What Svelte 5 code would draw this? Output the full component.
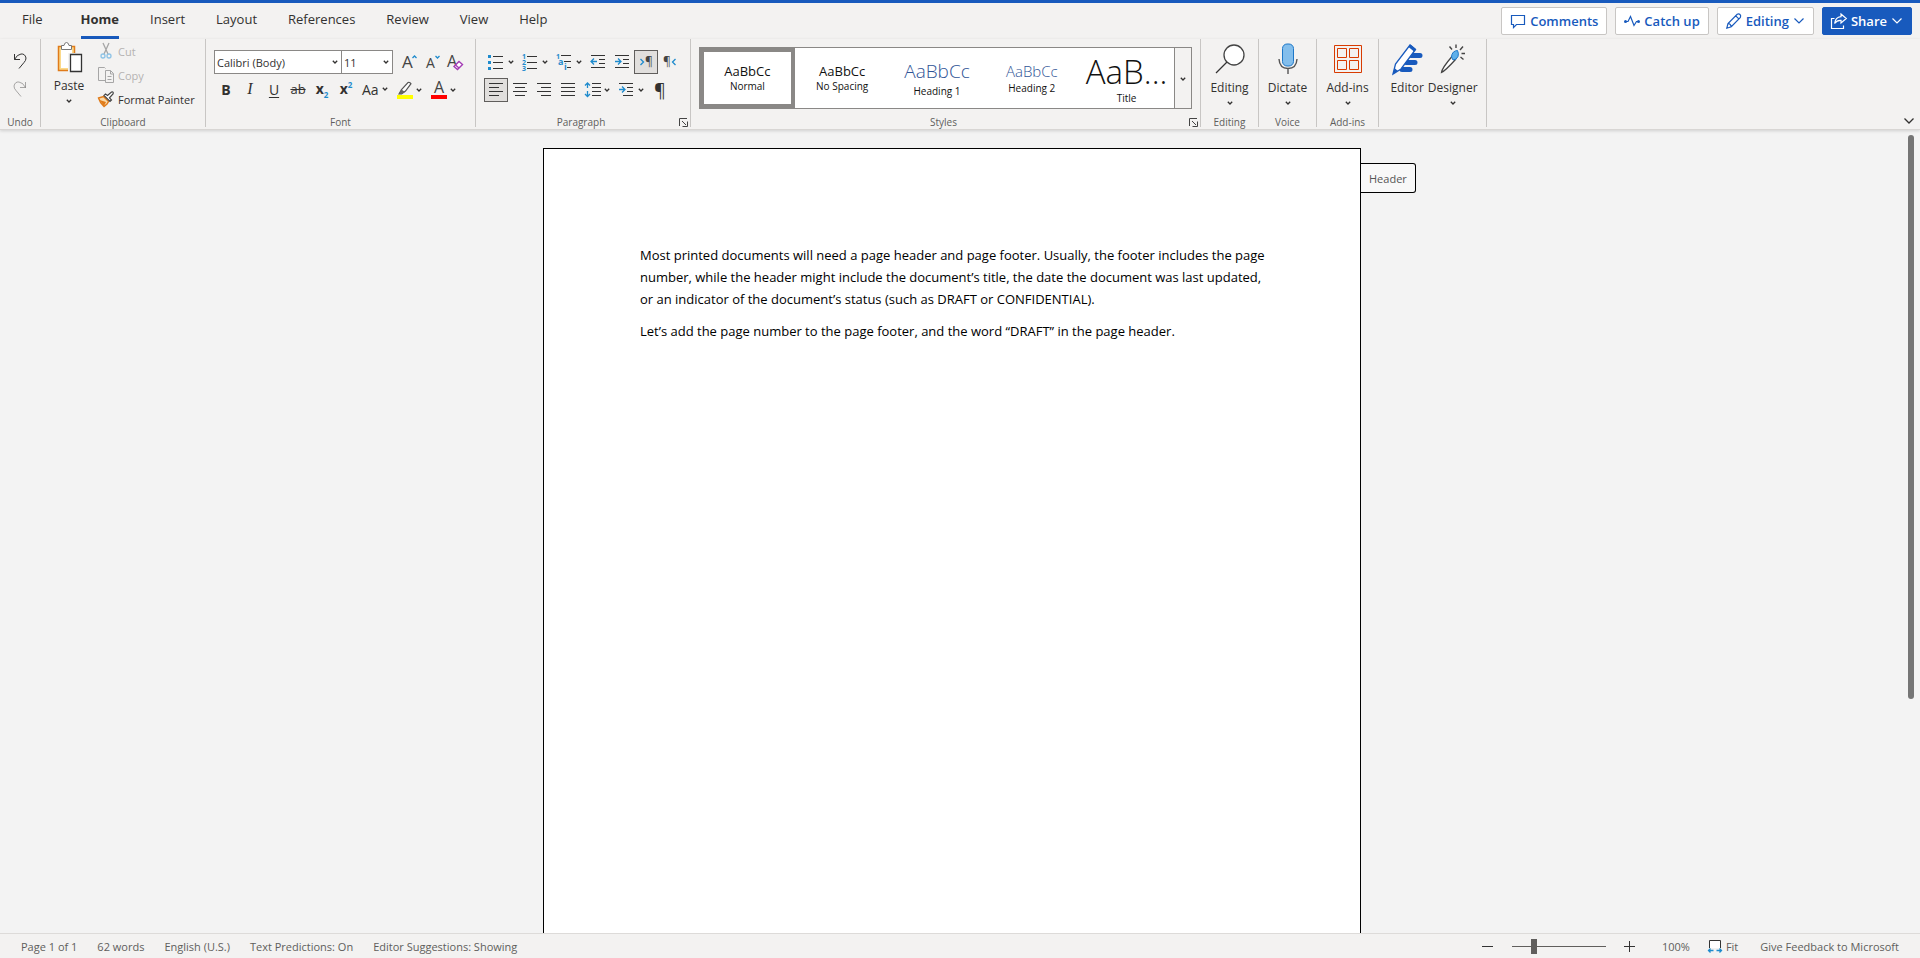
<script>
  const tabs = ['File', 'Home', 'Insert', 'Layout', 'References', 'Review', 'View', 'Help'];
  const styles = [
    { name: 'Normal', sample: 'AaBbCc', kind: 'normal' },
    { name: 'No Spacing', sample: 'AaBbCc', kind: 'normal' },
    { name: 'Heading 1', sample: 'AaBbCc', kind: 'heading1' },
    { name: 'Heading 2', sample: 'AaBbCc', kind: 'heading2' },
    { name: 'Title', sample: 'AaB...', kind: 'title' }
  ];
  const statusItems = [
    'Page 1 of 1',
    '62 words',
    'English (U.S.)',
    'Text Predictions: On',
    'Editor Suggestions: Showing'
  ];

  let activeTab = $state('Home');
  let activeStyle = $state('Normal');
  let align = $state('left');
  let zoom = $state(22);

  // horizontal strokes of the four alignment icons: [x1, x2]
  const alignIcons = {
    left: [[1, 15], [1, 11], [1, 15], [1, 11]],
    center: [[1, 15], [3, 13], [1, 15], [3, 13]],
    right: [[1, 15], [5, 15], [1, 15], [5, 15]],
    justify: [[1, 15], [1, 15], [1, 15], [1, 15]]
  };
</script>

{#snippet chevron()}
  <svg class="chevron" width="8" height="8" viewBox="0 0 8 8"><path d="M1.8 2.8 4 5l2.2-2.2" /></svg>
{/snippet}

{#snippet wideChevron()}
  <svg class="wide-chevron" width="12" height="12" viewBox="0 0 12 12"><path d="M1.5 3.5 6 8l4.500-4.500" /></svg>
{/snippet}

{#snippet launcher(name)}
  <button class="launcher" aria-label={name}>
    <svg width="9" height="9" viewBox="0 0 9 9"><path d="M.5 8V.5H8M3 3l4 4M8.500 3.500v5h-5" /></svg>
  </button>
{/snippet}

<div class="app">
  <header class="top">
    <nav class="tabs">
      {#each tabs as tab}
        <button class="tab" class:active={activeTab === tab} class:file={tab === 'File'} onclick={() => (activeTab = tab)}>{tab}</button>
      {/each}
    </nav>
    <div class="actions">
      <button class="action">
        <svg width="16" height="16" viewBox="0 0 16 16"><path d="M1.500 2.500h13v9h-8l-3 3v-3h-2z" /></svg>
        Comments
      </button>
      <button class="action">
        <svg width="16" height="16" viewBox="0 0 16 16">
          <path d="M1.500 8.500h2.500l2.500-5 3.500 9 2.500-4H15" />
          <circle class="dot" cx="1.500" cy="8.500" r="1.500" /><circle class="dot" cx="14.500" cy="8.500" r="1.500" />
        </svg>
        Catch up
      </button>
      <button class="action">
        <svg width="16" height="16" viewBox="0 0 16 16">
          <path d="M.8 15.200l1.200-4.700L11.200 1.300q1.600-1 2.800.2t.4 2.800L5.300 13.700zM9.700 2.800l3.400 3.400M2 10.500q2.700.3 3.300 3.200" />
        </svg>
        Editing
        {@render wideChevron()}
      </button>
      <button class="action primary">
        <svg width="16" height="16" viewBox="0 0 16 16">
          <path d="M3.500 5.500h-3v10h12v-3" />
          <path d="M10 1l5.300 4.500L10 10V7.300Q6 7 3.600 10.500 4.300 4.300 10 3.700z" />
        </svg>
        Share
        {@render wideChevron()}
      </button>
    </div>
  </header>

  <div class="ribbon">
    <section class="group undo">
      <div class="body stack">
        <button class="icon" aria-label="Undo">
          <svg class="line" width="16" height="18" viewBox="0 0 16 18"><path d="M2.500 2v5.500H8M2.500 7.500Q5 2.500 9 2T14 6q0 2.500-2 4.500l-5 6" /></svg>
        </button>
        <button class="icon" aria-label="Redo" disabled>
          <svg class="line faded" width="16" height="18" viewBox="0 0 16 18"><path d="M13.500 2v5.500H8M13.500 7.500Q11 2.500 7 2T2 6q0 2.500 2 4.500l5 6" /></svg>
        </button>
      </div>
      <div class="caption">Undo</div>
    </section>

    <section class="group clipboard">
      <div class="body">
        <button class="large">
          <svg width="28" height="32" viewBox="0 0 28 32">
            <path d="M3.500 5.500h16v24h-16z" fill="#fbd98a" stroke="#e07b1a" stroke-width="1.500" />
            <path d="M6 8h11v19H6z" fill="#fff" />
            <path d="M6.500 8.500v-4H9q.5-3 2.500-3t2.500 3h2.500v4z" fill="#fff" stroke="#777" />
            <path d="M13 12h13v19H13z" fill="#f3f2f1" />
            <path d="M15.500 13.500h11v17h-11z" fill="#fff" stroke="#333" stroke-width="1.300" />
          </svg>
          <span>Paste</span>
          {@render chevron()}
        </button>
        <div class="list">
          <button disabled>
            <svg width="18" height="18" viewBox="0 0 18 18">
              <path d="M6 1l5 11M12 1L7 12" fill="none" stroke="#a6a6a6" stroke-width="1.300" />
              <circle cx="6" cy="14" r="2" fill="none" stroke="#8ec3e6" stroke-width="1.300" /><circle cx="12" cy="14" r="2" fill="none" stroke="#8ec3e6" stroke-width="1.300" />
            </svg>
            Cut
          </button>
          <button disabled>
            <svg width="18" height="18" viewBox="0 0 18 18" fill="none" stroke="#a6a6a6">
              <path d="M8 14.500H1.500v-13h6l1 1" />
              <path d="M8.500 4.500h5l3 3v9h-8zM13.500 4.500v3.500h3M10.500 10.500h4M10.500 13.500h4" />
            </svg>
            Copy
          </button>
          <button>
            <svg width="18" height="18" viewBox="0 0 18 18">
              <path d="M1.500 8l5-1.500 5 5L10 14l-3 2.500Q3 13 1.500 8z" fill="#f9d9a8" stroke="#e07b1a" stroke-width="1.400" />
              <path d="M2.500 10l6.500 2-2 4z" fill="#e07b1a" />
              <path d="M7 5.500l6 6 1.500-1.500-2-2.200 3.500-3.800Q17 1.500 14.500 2l-4 3.500-2-1.500z" fill="#fff" stroke="#444" stroke-width="1.200" />
            </svg>
            Format Painter
          </button>
        </div>
      </div>
      <div class="caption">Clipboard</div>
    </section>

    <section class="group font">
      <div class="body rows">
        <div class="row">
          <div class="combo">
            <label class="family">
              <select aria-label="Font"><option>Calibri (Body)</option><option>Arial</option></select>
              {@render chevron()}
            </label>
            <label class="size">
              <select aria-label="Font size"><option>11</option><option>12</option></select>
              {@render chevron()}
            </label>
          </div>
          <button class="icon" aria-label="Grow font">
            <svg width="18" height="18" viewBox="0 0 18 18"><text x="2" y="15" font-size="17">A</text><path class="blue" d="M12.500 5l2-2 2 2" /></svg>
          </button>
          <button class="icon" aria-label="Shrink font">
            <svg width="18" height="18" viewBox="0 0 18 18"><text x="3" y="15" font-size="14">A</text><path class="blue" d="M12.500 3l2 2 2-2" /></svg>
          </button>
          <button class="icon" aria-label="Clear formatting">
            <svg width="18" height="18" viewBox="0 0 18 18"><text x="1" y="14" font-size="16">A</text><path d="M8 13.500L13 8.500l3.500 3-5 5z" fill="#fff" stroke="#a33bb5" stroke-width="1.400" /><path d="M9.500 12l3.500 3" stroke="#a33bb5" stroke-width="1.400" /></svg>
          </button>
        </div>
        <div class="row">
          <button class="icon glyph bold">B</button>
          <button class="icon glyph italic">I</button>
          <button class="icon glyph underline">U</button>
          <button class="icon glyph strike">ab</button>
          <button class="icon glyph bold"><span class="script">x<sub>2</sub></span></button>
          <button class="icon glyph bold"><span class="script">x<sup>2</sup></span></button>
          <button class="icon split glyph">Aa{@render chevron()}</button>
          <button class="icon split" aria-label="Highlight color">
            <svg width="18" height="18" viewBox="0 0 18 18">
              <path d="M3 13l2.500-4.500L12 1.500q2-.5 3 1.200L9.500 10 5.500 13z" fill="#fff" stroke="#555" stroke-width="1.200" /><path d="M3 13l2.500-4.500 3.500 2.500-3.500 2z" fill="#666" />
              <path d="M1 14h16v4H1z" fill="#ffff00" />
            </svg>
            {@render chevron()}
          </button>
          <button class="icon split" aria-label="Font color">
            <svg width="18" height="18" viewBox="0 0 18 18"><text x="4" y="12" font-size="16">A</text><path d="M1 14h16v4H1z" fill="#ff0000" /></svg>
            {@render chevron()}
          </button>
        </div>
      </div>
      <div class="caption">Font</div>
    </section>

    <section class="group paragraph">
      <div class="body rows">
        <div class="row">
          <button class="icon split" aria-label="Bullets">
            <svg class="line" width="16" height="18" viewBox="0 0 16 18"><path d="M5 3.500h10M5 9.500h10M5 15.500h10" /><path class="fill-blue" d="M0 2h3v3H0zM0 8h3v3H0zM0 14h3v3H0z" /></svg>
            {@render chevron()}
          </button>
          <button class="icon split" aria-label="Numbering">
            <svg class="line" width="16" height="18" viewBox="0 0 16 18"><path d="M5 3.500h10M5 9.500h10M5 15.500h10" /><text x="0" y="6" class="digit">1</text><text x="0" y="12" class="digit">2</text><text x="0" y="18" class="digit">3</text></svg>
            {@render chevron()}
          </button>
          <button class="icon split" aria-label="Multilevel list">
            <svg class="line" width="16" height="18" viewBox="0 0 16 18"><path d="M5 2.500h10M8 8.500h7M11 14.500h4" /><text x="0" y="6" class="digit">1</text><text x="2" y="12" class="digit letter">a</text><text x="8" y="17" class="digit letter">i</text></svg>
            {@render chevron()}
          </button>
          <button class="icon" aria-label="Decrease indent">
            <svg class="line" width="16" height="16" viewBox="0 0 16 16"><path d="M1 1.500h14M9 5.500h6M9 9.500h6M1 13.500h14" /><path class="blue" d="M7 7.500H1M4 4.500l-3 3 3 3" /></svg>
          </button>
          <button class="icon" aria-label="Increase indent">
            <svg class="line" width="16" height="16" viewBox="0 0 16 16"><path d="M1 1.500h14M9 5.500h6M9 9.500h6M1 13.500h14" /><path class="blue" d="M1 7.500h6M4 4.500l3 3-3 3" /></svg>
          </button>
          <button class="icon pressed" aria-label="Left-to-right">
            <svg class="line" width="16" height="16" viewBox="0 0 16 16"><path class="blue" d="M2.500 5l3 3-3 3" /><text x="7" y="12" font-size="12">¶</text></svg>
          </button>
          <button class="icon" aria-label="Right-to-left">
            <svg class="line" width="16" height="16" viewBox="0 0 16 16"><text x="1" y="12" font-size="12">¶</text><path class="blue" d="M13.500 5l-3 3 3 3" /></svg>
          </button>
        </div>
        <div class="row">
          {#each Object.entries(alignIcons) as [name, strokes]}
            <button class="icon" class:pressed={align === name} aria-label="Align {name}" onclick={() => (align = name)}>
              <svg class="line" width="16" height="16" viewBox="0 0 16 16">
                {#each strokes as [from, to], i}
                  <path d="M{from} {1.5 + i * 4}H{to}" />
                {/each}
              </svg>
            </button>
          {/each}
          <button class="icon split" aria-label="Line spacing">
            <svg class="line" width="18" height="16" viewBox="0 0 18 16"><path d="M8 1.500h9M8 5.500h9M8 9.500h9M8 13.500h9" /><path class="blue" d="M3.500 1v5M1 3.500L3.500 1 6 3.500M3.500 9v5.500M1 12l2.500 2.500L6 12" /></svg>
            {@render chevron()}
          </button>
          <button class="icon split" aria-label="Special indent">
            <svg class="line" width="16" height="16" viewBox="0 0 16 16"><path d="M1 1.500h14M9 5.500h6M9 9.500h6M5 13.500h10" /><path class="blue" d="M1 7.500h6M4 4.500l3 3-3 3" /></svg>
            {@render chevron()}
          </button>
          <button class="icon pilcrow" aria-label="Show formatting marks">¶</button>
        </div>
      </div>
      <div class="caption beside">Paragraph</div>
      {@render launcher('Paragraph options')}
    </section>

    <section class="group styles">
      <div class="body gallery">
        {#each styles as style}
          <button class="tile {style.kind}" class:selected={activeStyle === style.name} onclick={() => (activeStyle = style.name)}>
            <span class="sample">{style.sample}</span>
            <span class="name">{style.name}</span>
          </button>
        {/each}
        <button class="more" aria-label="More styles">{@render chevron()}</button>
      </div>
      <div class="caption beside">Styles</div>
      {@render launcher('Styles options')}
    </section>

    <section class="group single">
      <div class="body">
        <button class="large">
          <svg width="30" height="32" viewBox="0 0 30 32"><circle cx="19" cy="12" r="10" fill="#fff" stroke="#444" stroke-width="1.300" /><path d="M12 19L1 30" stroke="#333" stroke-width="1.300" /></svg>
          <span>Editing</span>
          {@render chevron()}
        </button>
      </div>
      <div class="caption">Editing</div>
    </section>

    <section class="group single">
      <div class="body">
        <button class="large">
          <svg width="28" height="32" viewBox="0 0 28 32"><rect x="8.500" y="1" width="11" height="22" rx="4.500" fill="#83beec" stroke="#1e78c8" /><path d="M5 16q.5 9.500 9 9.500t9-9.500M14 25.500V31" fill="none" stroke="#555" stroke-width="1.400" /></svg>
          <span>Dictate</span>
          {@render chevron()}
        </button>
      </div>
      <div class="caption">Voice</div>
    </section>

    <section class="group addins">
      <div class="body">
        <button class="large">
          <svg width="30" height="32" viewBox="0 0 30 32" fill="none" stroke="#d83b01"><path d="M1.500 2.500h27v27h-27zM4.500 5.500h9v9h-9zM16.500 5.500h9v9h-9zM4.500 17.500h9v9h-9zM16.500 17.500h9v9h-9z" /></svg>
          <span>Add-ins</span>
          {@render chevron()}
        </button>
      </div>
      <div class="caption">Add-ins</div>
    </section>

    <section class="group designer">
      <div class="body">
        <button class="large">
          <svg width="32" height="32" viewBox="0 0 32 32">
            <path d="M20 12.500h9M15 19.500h9M11 26.500h8" stroke="#185abd" stroke-width="5" stroke-linecap="round" />
            <path d="M2 31l2.500-10L19 2l5.500 4.500L10 26z" fill="#fff" stroke="#185abd" stroke-width="1.300" />
            <path d="M17.500 4L19.500 1.500l5.500 4.500-2 2.500zM2 31l1.500-6 3.500 3z" fill="#185abd" />
          </svg>
          <span>Editor</span>
        </button>
        <button class="large">
          <svg width="28" height="32" viewBox="0 0 28 32">
            <path d="M2.500 29.500Q3 25 13 13.500l3.500 3Q6 28 2.500 29.500z" fill="#fff" stroke="#444" stroke-width="1.300" />
            <path d="M12.500 14q0-3 2-5 2-1.500 4-1.500 1.500 3 .5 6-1.500 3.500-5 3.500z" fill="#5fb0ea" stroke="#1e78c8" />
            <path d="M17 1.500V5M24 3.500L21 7M10.500 3.500L13 6.500M22.500 10.500H26M21.500 14l3 2.500" fill="none" stroke="#444" stroke-width="1.400" />
          </svg>
          <span>Designer</span>
          {@render chevron()}
        </button>
      </div>
    </section>
    <button class="collapse" aria-label="Collapse ribbon">{@render wideChevron()}</button>
  </div>

  <main class="canvas">
    <div class="sheet">
      <article class="page">
        <p>
          Most printed documents will need a page header and page footer. Usually, the footer includes the page<br />
          number, while the header might include the document’s title, the date the document was last updated,<br />
          or an indicator of the document’s status (such as DRAFT or CONFIDENTIAL).
        </p>
        <p>Let’s add the page number to the page footer, and the word “DRAFT” in the page header.</p>
      </article>
      <button class="header-tag">Header</button>
    </div>
    <div class="scrollbar"><div class="thumb"></div></div>
  </main>

  <footer class="status">
    <div class="info">
      {#each statusItems as item}
        <span>{item}</span>
      {/each}
    </div>
    <div class="view">
      <button class="zoom-step" aria-label="Zoom out"><svg class="line" width="12" height="12" viewBox="0 0 12 12"><path d="M0 6.500h11" /></svg></button>
      <input type="range" min="0" max="100" bind:value={zoom} aria-label="Zoom" />
      <button class="zoom-step" aria-label="Zoom in"><svg class="line" width="12" height="12" viewBox="0 0 12 12"><path d="M0 6.500h11M5.500 1v11" /></svg></button>
      <span class="percent">100%</span>
      <button class="fit">
        <svg width="14" height="14" viewBox="0 0 14 14"><path d="M1.500 9V1.500h11V9" fill="#fff" stroke="#333" /><path class="blue" d="M.5 11.500h5M8.500 11.500h5M2.500 9.500l-2 2 2 2M11.500 9.500l2 2-2 2" /></svg>
        Fit
      </button>
      <a href="#feedback">Give Feedback to Microsoft</a>
    </div>
  </footer>
</div>

<style>
  :global(body) {
    margin: 0;
  }

  .app {
    display: flex;
    flex-direction: column;
    height: 100vh;
    overflow: hidden;
    font-family: 'Open Sans', 'Segoe UI', sans-serif;
    font-size: 12px;
    color: #323130;
    background: #f3f3f3;
  }

  button,
  select {
    font: inherit;
    color: inherit;
    background: none;
    border: 0;
    padding: 0;
    cursor: pointer;
  }

  svg {
    flex: none;
    overflow: visible;
  }

  svg text {
    fill: #444;
    stroke: none;
  }

  .top {
    display: flex;
    justify-content: space-between;
    height: 36px;
    padding-right: 8px;
    border-top: 3px solid #185abd;
    background: #f3f2f1;
  }

  .tabs {
    display: flex;
    gap: 31px;
    padding-left: 22px;
  }

  .tab {
    padding-bottom: 2px;
    border-bottom: 3px solid transparent;
    font-size: 13px;
  }

  .tab.file {
    margin-right: 7px;
  }

  .tab.active {
    border-color: #185abd;
    font-weight: 700;
  }

  .actions {
    display: flex;
    gap: 8px;
    padding: 4px 0;
  }

  .action {
    display: flex;
    align-items: center;
    gap: 4px;
    padding: 0 8px;
    border: 1px solid #c8c6c4;
    border-radius: 2px;
    background: #fff;
    color: #185abd;
    font-size: 13px;
    font-weight: 600;
    white-space: nowrap;
  }

  .action svg {
    fill: none;
    stroke: currentColor;
    stroke-width: 1.2;
  }

  .action .dot {
    fill: currentColor;
    stroke: none;
  }

  .action.primary {
    border-color: #185abd;
    background: #185abd;
    color: #fff;
  }

  .wide-chevron,
  .chevron {
    fill: none;
    stroke: currentColor;
    stroke-width: 1.3;
  }

  .ribbon {
    position: relative;
    z-index: 1;
    display: flex;
    height: 90px;
    background: #f3f2f1;
    border-bottom: 1px solid #d8d6d4;
    box-shadow: 0 1px 3px rgba(0, 0, 0, 0.15);
  }

  .group {
    position: relative;
    display: flex;
    flex-direction: column;
    box-sizing: border-box;
    height: 88px;
    border-right: 1px solid #c8c6c4;
  }

  .body {
    display: flex;
    height: 76px;
  }

  .caption {
    font-size: 10px;
    line-height: 14px;
    height: 12px;
    margin-top: auto;
    text-align: center;
    color: #605e5c;
  }

  .caption.beside {
    padding-right: 4px;
  }

  .undo {
    width: 41px;
  }

  .stack {
    flex-direction: column;
    align-items: center;
    gap: 4px;
    padding-top: 10px;
    box-sizing: border-box;
  }

  .faded {
    opacity: 0.4;
  }

  .clipboard {
    width: 165px;
  }

  .large {
    display: flex;
    flex-direction: column;
    align-items: center;
    padding-top: 4px;
    white-space: nowrap;
  }

  .large span {
    line-height: 20px;
    margin-top: 3px;
  }

  .large .chevron {
    margin-top: 1px;
  }

  .clipboard .large {
    width: 56px;
    padding-top: 2px;
  }

  .list {
    display: flex;
    flex-direction: column;
  }

  .list button {
    display: flex;
    align-items: center;
    gap: 3px;
    height: 24px;
    font-size: 11px;
    white-space: nowrap;
  }

  .list button:disabled {
    color: #b5b3b1;
  }

  .rows {
    flex-direction: column;
    gap: 4px;
    padding: 11px 8px 0;
    box-sizing: border-box;
  }

  .font {
    width: 270px;
  }

  .row {
    display: flex;
  }

  .icon {
    display: flex;
    align-items: center;
    justify-content: center;
    box-sizing: border-box;
    width: 24px;
    height: 24px;
  }

  .icon.split {
    justify-content: space-between;
    width: 34px;
    padding-right: 3px;
    padding-left: 4px;
  }

  .icon.pressed {
    border: 1px solid #605e5c;
    background: #e1dfdd;
  }

  .glyph {
    padding-bottom: 2px;
    font-size: 14px;
  }

  .bold {
    font-weight: 700;
  }

  .italic {
    font-family: 'Liberation Serif', serif;
    font-style: italic;
    font-size: 16px;
  }

  .underline {
    text-decoration: underline;
    text-underline-offset: 2px;
  }

  .strike {
    font-size: 13px;
    text-decoration: line-through;
  }

  .script {
    line-height: 16px;
  }

  sub,
  sup {
    font-size: 8px;
    line-height: 0;
    color: #1e8bcd;
  }

  .pilcrow {
    font-size: 18px;
  }

  .combo {
    display: flex;
    flex: none;
    box-sizing: border-box;
    height: 24px;
    width: 179px;
    margin-right: 4px;
    border: 1px solid #8a8886;
    background: #fff;
    font-size: 11px;
  }

  .combo label {
    position: relative;
    display: flex;
    align-items: center;
  }

  .family {
    flex: 1;
    border-right: 1px solid #8a8886;
  }

  .size {
    width: 50px;
  }

  .combo select {
    width: 100%;
    height: 100%;
    padding-left: 2px;
    appearance: none;
  }

  .combo .chevron {
    position: absolute;
    right: 2px;
    pointer-events: none;
  }

  .line {
    fill: none;
    stroke: #333;
  }

  .blue {
    fill: none;
    stroke: #1e8bcd;
    stroke-width: 1.3;
  }

  .fill-blue {
    fill: #1e8bcd;
    stroke: none;
  }

  .digit {
    fill: #1e8bcd;
    font-size: 7px;
    font-weight: 700;
  }

  .letter {
    font-size: 9px;
  }

  .paragraph {
    width: 215px;
  }

  .launcher {
    position: absolute;
    right: 2px;
    bottom: 0;
    width: 9px;
    height: 9px;
    display: flex;
  }

  .launcher svg {
    fill: none;
    stroke: #444;
  }

  .styles {
    width: 510px;
  }

  .gallery {
    box-sizing: border-box;
    height: 62px;
    margin: 8px 8px 0;
    border: 1px solid #8a8886;
    background: #fff;
  }

  .tile {
    display: flex;
    flex: 1;
    flex-direction: column;
    align-items: center;
    justify-content: center;
    box-sizing: border-box;
    min-width: 0;
    overflow: hidden;
    border: 4px solid transparent;
    color: #111;
  }

  .tile.selected {
    border-color: #8a8886;
  }

  .sample {
    font-size: 13px;
    line-height: 16px;
  }

  .name {
    font-size: 10px;
    line-height: 14px;
  }

  .heading1 .sample {
    font-size: 19px;
    font-weight: 300;
    line-height: 26px;
    color: #2f5496;
  }

  .heading2 .sample {
    font-size: 15px;
    font-weight: 300;
    line-height: 20px;
    color: #2f5496;
  }

  .title {
    justify-content: flex-start;
  }

  .title .sample {
    font-size: 33px;
    font-weight: 300;
    line-height: 40px;
  }

  .title .name {
    line-height: 12px;
  }

  .more {
    width: 17px;
    border-left: 1px solid #8a8886;
    background: #f3f2f1;
  }

  .single {
    width: 58px;
  }

  .addins {
    width: 62px;
  }

  .single .large,
  .addins .large {
    flex: 1;
  }

  .designer {
    width: 108px;
  }

  .designer .body {
    justify-content: center;
    gap: 4px;
    padding-left: 3px;
  }

  .collapse {
    display: flex;
    align-self: flex-end;
    margin: 0 5px 2px auto;
  }

  .canvas {
    position: relative;
    display: flex;
    flex: 1;
    justify-content: center;
    min-height: 0;
    padding: 18px 16px 0 0;
    overflow: hidden;
  }

  .sheet {
    position: relative;
    width: 818px;
  }

  .page {
    box-sizing: border-box;
    height: 1056px;
    padding: 95px 96px;
    border: 1px solid #000;
    background: #fff;
    color: #000;
    font-family: 'Open Sans', Calibri, sans-serif;
    font-size: 13px;
    line-height: 22px;
    white-space: nowrap;
  }

  .page p {
    margin: 0 0 10px;
  }

  .header-tag {
    position: absolute;
    top: 15px;
    left: 100%;
    height: 30px;
    padding: 0 8px;
    border: 1px solid #000;
    border-left: 0;
    border-radius: 0 3px 3px 0;
    background: #f8f8f8;
    color: #555;
    font-size: 11px;
  }

  .scrollbar {
    position: absolute;
    top: 5px;
    right: 6px;
    bottom: 4px;
    width: 6px;
  }

  .thumb {
    height: 71%;
    border-radius: 3px;
    background: #757575;
  }

  .status {
    display: flex;
    align-items: center;
    justify-content: space-between;
    position: relative;
    height: 24px;
    padding: 0 21px;
    border-top: 1px solid #dddbd9;
    background: #f3f2f1;
    color: #605e5c;
    font-size: 11px;
    white-space: nowrap;
  }

  .info {
    display: flex;
    gap: 20px;
  }

  .view {
    display: flex;
    align-items: center;
    gap: 18px;
  }

  .view svg {
    display: block;
  }

  .percent {
    padding-left: 8px;
  }

  .fit {
    display: flex;
    align-items: center;
    gap: 4px;
  }

  .status a {
    padding-left: 4px;
    color: inherit;
    text-decoration: none;
  }

  input[type='range'] {
    width: 94px;
    height: 16px;
    margin: 0;
    appearance: none;
    background: none;
  }

  input[type='range']::-webkit-slider-runnable-track {
    height: 1px;
    background: #605e5c;
  }

  input[type='range']::-webkit-slider-thumb {
    appearance: none;
    width: 6px;
    height: 15px;
    margin-top: -7px;
    background: #605e5c;
  }
</style>
